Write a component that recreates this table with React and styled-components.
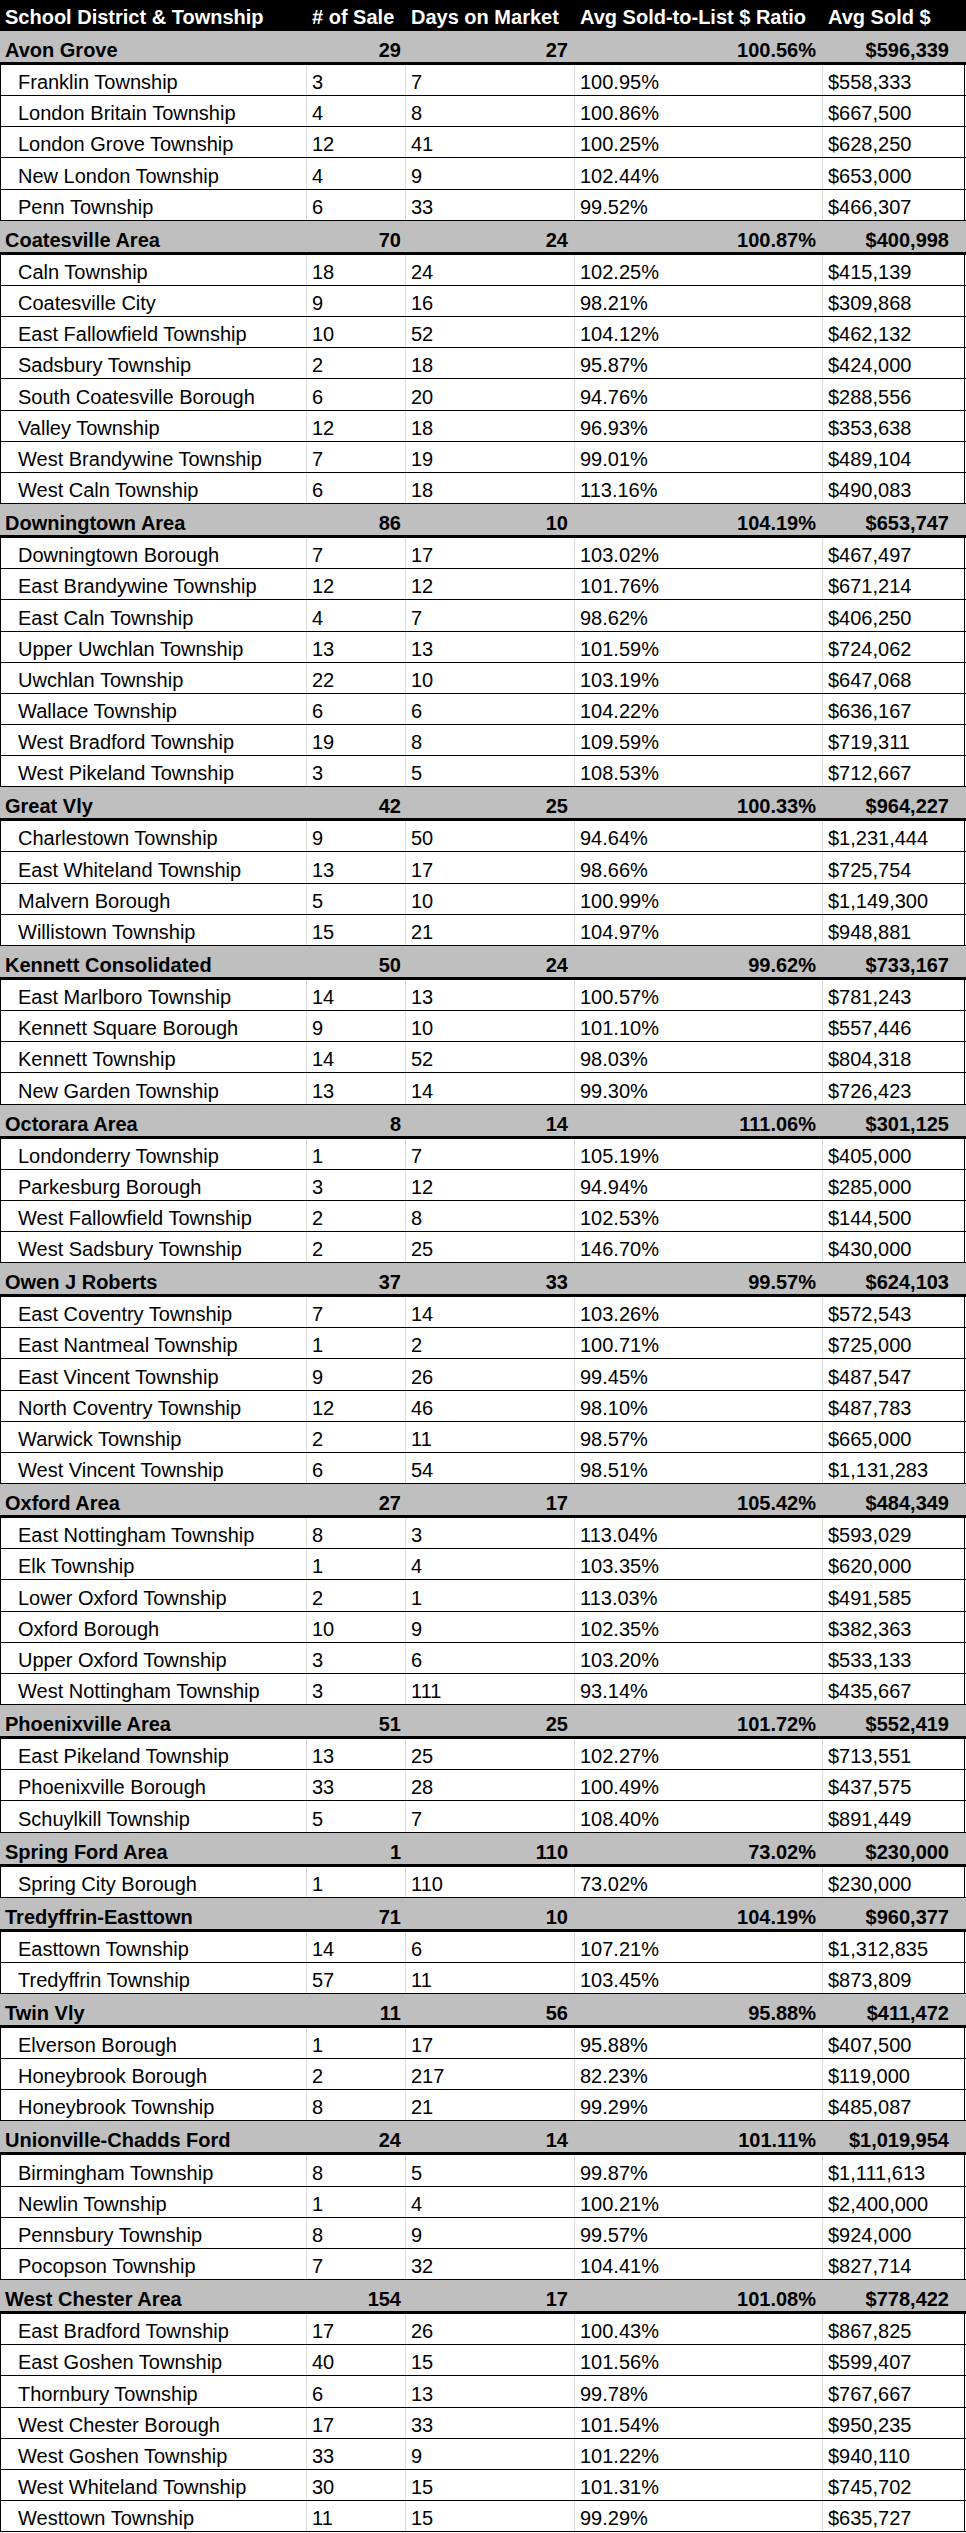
import React from "react";
import styled, { createGlobalStyle } from "styled-components";

const GlobalStyle = createGlobalStyle`
  html, body { margin: 0; padding: 0; background: #ffffff; }
  body { font-family: "Liberation Sans", Arial, sans-serif; color: #000; }
`;

const data = [
  { name: "Avon Grove", v: ["29", "27", "100.56%", "$596,339"], rows: [
    ["Franklin Township", "3", "7", "100.95%", "$558,333"],
    ["London Britain Township", "4", "8", "100.86%", "$667,500"],
    ["London Grove Township", "12", "41", "100.25%", "$628,250"],
    ["New London Township", "4", "9", "102.44%", "$653,000"],
    ["Penn Township", "6", "33", "99.52%", "$466,307"],
  ]},
  { name: "Coatesville Area", v: ["70", "24", "100.87%", "$400,998"], rows: [
    ["Caln Township", "18", "24", "102.25%", "$415,139"],
    ["Coatesville City", "9", "16", "98.21%", "$309,868"],
    ["East Fallowfield Township", "10", "52", "104.12%", "$462,132"],
    ["Sadsbury Township", "2", "18", "95.87%", "$424,000"],
    ["South Coatesville Borough", "6", "20", "94.76%", "$288,556"],
    ["Valley Township", "12", "18", "96.93%", "$353,638"],
    ["West Brandywine Township", "7", "19", "99.01%", "$489,104"],
    ["West Caln Township", "6", "18", "113.16%", "$490,083"],
  ]},
  { name: "Downingtown Area", v: ["86", "10", "104.19%", "$653,747"], rows: [
    ["Downingtown Borough", "7", "17", "103.02%", "$467,497"],
    ["East Brandywine Township", "12", "12", "101.76%", "$671,214"],
    ["East Caln Township", "4", "7", "98.62%", "$406,250"],
    ["Upper Uwchlan Township", "13", "13", "101.59%", "$724,062"],
    ["Uwchlan Township", "22", "10", "103.19%", "$647,068"],
    ["Wallace Township", "6", "6", "104.22%", "$636,167"],
    ["West Bradford Township", "19", "8", "109.59%", "$719,311"],
    ["West Pikeland Township", "3", "5", "108.53%", "$712,667"],
  ]},
  { name: "Great Vly", v: ["42", "25", "100.33%", "$964,227"], rows: [
    ["Charlestown Township", "9", "50", "94.64%", "$1,231,444"],
    ["East Whiteland Township", "13", "17", "98.66%", "$725,754"],
    ["Malvern Borough", "5", "10", "100.99%", "$1,149,300"],
    ["Willistown Township", "15", "21", "104.97%", "$948,881"],
  ]},
  { name: "Kennett Consolidated", v: ["50", "24", "99.62%", "$733,167"], rows: [
    ["East Marlboro Township", "14", "13", "100.57%", "$781,243"],
    ["Kennett Square Borough", "9", "10", "101.10%", "$557,446"],
    ["Kennett Township", "14", "52", "98.03%", "$804,318"],
    ["New Garden Township", "13", "14", "99.30%", "$726,423"],
  ]},
  { name: "Octorara Area", v: ["8", "14", "111.06%", "$301,125"], rows: [
    ["Londonderry Township", "1", "7", "105.19%", "$405,000"],
    ["Parkesburg Borough", "3", "12", "94.94%", "$285,000"],
    ["West Fallowfield Township", "2", "8", "102.53%", "$144,500"],
    ["West Sadsbury Township", "2", "25", "146.70%", "$430,000"],
  ]},
  { name: "Owen J Roberts", v: ["37", "33", "99.57%", "$624,103"], rows: [
    ["East Coventry Township", "7", "14", "103.26%", "$572,543"],
    ["East Nantmeal Township", "1", "2", "100.71%", "$725,000"],
    ["East Vincent Township", "9", "26", "99.45%", "$487,547"],
    ["North Coventry Township", "12", "46", "98.10%", "$487,783"],
    ["Warwick Township", "2", "11", "98.57%", "$665,000"],
    ["West Vincent Township", "6", "54", "98.51%", "$1,131,283"],
  ]},
  { name: "Oxford Area", v: ["27", "17", "105.42%", "$484,349"], rows: [
    ["East Nottingham Township", "8", "3", "113.04%", "$593,029"],
    ["Elk Township", "1", "4", "103.35%", "$620,000"],
    ["Lower Oxford Township", "2", "1", "113.03%", "$491,585"],
    ["Oxford Borough", "10", "9", "102.35%", "$382,363"],
    ["Upper Oxford Township", "3", "6", "103.20%", "$533,133"],
    ["West Nottingham Township", "3", "111", "93.14%", "$435,667"],
  ]},
  { name: "Phoenixville Area", v: ["51", "25", "101.72%", "$552,419"], rows: [
    ["East Pikeland Township", "13", "25", "102.27%", "$713,551"],
    ["Phoenixville Borough", "33", "28", "100.49%", "$437,575"],
    ["Schuylkill Township", "5", "7", "108.40%", "$891,449"],
  ]},
  { name: "Spring Ford Area", v: ["1", "110", "73.02%", "$230,000"], rows: [
    ["Spring City Borough", "1", "110", "73.02%", "$230,000"],
  ]},
  { name: "Tredyffrin-Easttown", v: ["71", "10", "104.19%", "$960,377"], rows: [
    ["Easttown Township", "14", "6", "107.21%", "$1,312,835"],
    ["Tredyffrin Township", "57", "11", "103.45%", "$873,809"],
  ]},
  { name: "Twin Vly", v: ["11", "56", "95.88%", "$411,472"], rows: [
    ["Elverson Borough", "1", "17", "95.88%", "$407,500"],
    ["Honeybrook Borough", "2", "217", "82.23%", "$119,000"],
    ["Honeybrook Township", "8", "21", "99.29%", "$485,087"],
  ]},
  { name: "Unionville-Chadds Ford", v: ["24", "14", "101.11%", "$1,019,954"], rows: [
    ["Birmingham Township", "8", "5", "99.87%", "$1,111,613"],
    ["Newlin Township", "1", "4", "100.21%", "$2,400,000"],
    ["Pennsbury Township", "8", "9", "99.57%", "$924,000"],
    ["Pocopson Township", "7", "32", "104.41%", "$827,714"],
  ]},
  { name: "West Chester Area", v: ["154", "17", "101.08%", "$778,422"], rows: [
    ["East Bradford Township", "17", "26", "100.43%", "$867,825"],
    ["East Goshen Township", "40", "15", "101.56%", "$599,407"],
    ["Thornbury Township", "6", "13", "99.78%", "$767,667"],
    ["West Chester Borough", "17", "33", "101.54%", "$950,235"],
    ["West Goshen Township", "33", "9", "101.22%", "$940,110"],
    ["West Whiteland Township", "30", "15", "101.31%", "$745,702"],
    ["Westtown Township", "11", "15", "99.29%", "$635,727"],
  ]},
];

const Sheet = styled.div`
  width: 966px;
  display: flex;
  flex-direction: column;
`;

const Row = styled.div`
  display: grid;
  grid-template-columns: 307px 99px 169px 248px 1fr;
  box-sizing: border-box;
  width: 966px;
`;

const HeaderRow = styled(Row)`
  height: 31px;
  background: #000;
  color: #fff;
  font-weight: bold;
`;

const GroupRow = styled(Row)`
  height: 34px;
  background: #bfbfbf;
  border-bottom: 3px solid #000;
  font-weight: bold;
`;

const DataRow = styled(Row)`
  height: 31.17px;
  background: #fff;
  border-bottom: 1px solid #000;
`;

const Cell = styled.div`
  box-sizing: border-box;
  display: flex;
  align-items: flex-end;
  justify-content: ${(p) => (p.$right ? "flex-end" : "flex-start")};
  padding: 0 ${(p) => p.$pr ?? 6}px ${(p) => p.$pb ?? 1}px ${(p) => p.$pl ?? 5}px;
  font-size: 20px;
  line-height: normal;
  white-space: nowrap;
  overflow: hidden;
`;

const HeadCell = styled(Cell)`
  padding-bottom: 2px;
`;

const DataCell = styled(Cell)`
  border-right: 1px solid #d9d9d9;
  &:first-child { border-left: 1px solid #000; }
  &:last-child { border-right: 1px solid #000; margin-right: 1px; }
`;

export default function App() {
  return (
    <>
      <GlobalStyle />
      <Sheet>
        <HeaderRow>
          <HeadCell>School District &amp; Township</HeadCell>
          <HeadCell>#&nbsp;of Sale</HeadCell>
          <HeadCell>Days on Market</HeadCell>
          <HeadCell>Avg Sold-to-List $ Ratio</HeadCell>
          <HeadCell>Avg Sold $</HeadCell>
        </HeaderRow>
        {data.map((g) => (
          <React.Fragment key={g.name}>
            <GroupRow>
              <Cell $pb={0}>{g.name}</Cell>
              <Cell $right $pb={0} $pr={5}>{g.v[0]}</Cell>
              <Cell $right $pb={0} $pr={7}>{g.v[1]}</Cell>
              <Cell $right $pb={0} $pr={7}>{g.v[2]}</Cell>
              <Cell $right $pb={0} $pr={17}>{g.v[3]}</Cell>
            </GroupRow>
            {g.rows.map((r) => (
              <DataRow key={r[0]}>
                <DataCell $pl={17}>{r[0]}</DataCell>
                <DataCell>{r[1]}</DataCell>
                <DataCell>{r[2]}</DataCell>
                <DataCell>{r[3]}</DataCell>
                <DataCell>{r[4]}</DataCell>
              </DataRow>
            ))}
          </React.Fragment>
        ))}
      </Sheet>
    </>
  );
}
